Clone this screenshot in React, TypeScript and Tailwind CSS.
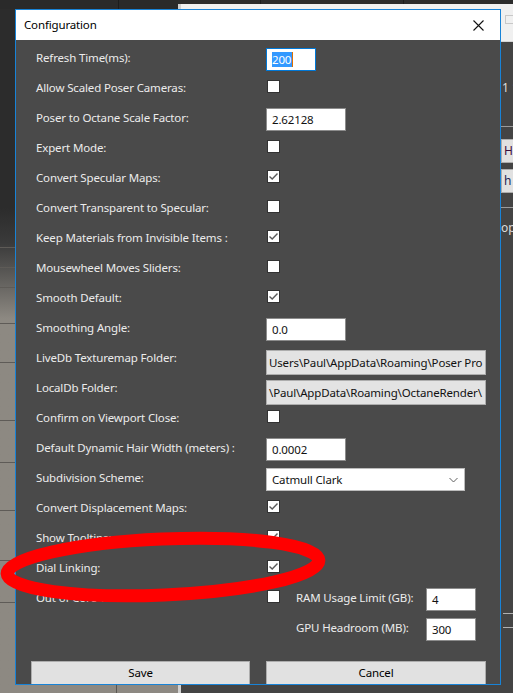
import React from "react";

type Row =
  | { label: string; kind: "check"; checked: boolean }
  | { label: string; kind: "text"; value: string; width: string; focused?: boolean }
  | { label: string; kind: "folder"; value: string }
  | { label: string; kind: "select"; value: string };

const rows: Row[] = [
  { label: "Refresh Time(ms):", kind: "text", value: "200", width: "w-[50px]", focused: true },
  { label: "Allow Scaled Poser Cameras:", kind: "check", checked: false },
  { label: "Poser to Octane Scale Factor:", kind: "text", value: "2.62128", width: "w-[80px]" },
  { label: "Expert Mode:", kind: "check", checked: false },
  { label: "Convert Specular Maps:", kind: "check", checked: true },
  { label: "Convert Transparent to Specular:", kind: "check", checked: false },
  { label: "Keep Materials from Invisible Items :", kind: "check", checked: true },
  { label: "Mousewheel Moves Sliders:", kind: "check", checked: false },
  { label: "Smooth Default:", kind: "check", checked: true },
  { label: "Smoothing Angle:", kind: "text", value: "0.0", width: "w-[80px]" },
  { label: "LiveDb Texturemap Folder:", kind: "folder", value: "Users\\Paul\\AppData\\Roaming\\Poser Pro" },
  { label: "LocalDb Folder:", kind: "folder", value: "\\Paul\\AppData\\Roaming\\OctaneRender\\" },
  { label: "Confirm on Viewport Close:", kind: "check", checked: false },
  { label: "Default Dynamic Hair Width (meters) :", kind: "text", value: "0.0002", width: "w-[80px]" },
  { label: "Subdivision Scheme:", kind: "select", value: "Catmull Clark" },
  { label: "Convert Displacement Maps:", kind: "check", checked: true },
  { label: "Show Tooltips:", kind: "check", checked: true },
  { label: "Dial Linking:", kind: "check", checked: true },
];

const txt = "text-[11.5px] tracking-[-0.15px]";

function CheckBox({ checked }: { checked: boolean }) {
  return (
    <div className="mt-[8px] ml-[1px] w-[13px] h-[13px] shrink-0 bg-white border border-[#333333] flex items-center justify-center">
      {checked && (
        <svg width="11" height="11" viewBox="0 0 11 11">
          <path d="M1.5 5.5 L4.2 8 L9.5 2.5" fill="none" stroke="#5c5c5c" strokeWidth="1.4" />
        </svg>
      )}
    </div>
  );
}

function TextBox({ value, width, focused }: { value: string; width: string; focused?: boolean }) {
  return (
    <div
      className={`mt-[6px] h-[23px] ${width} shrink-0 bg-white border flex items-center pl-[5px] ${txt} text-[#111111] ${
        focused ? "border-[#0078d7]" : "border-[#8c8c8c]"
      }`}
    >
      {focused ? (
        <span className="bg-[#3399ff] text-white leading-[15px] pr-[1px] border-r border-[#e07000]">{value}</span>
      ) : (
        value
      )}
    </div>
  );
}

function Control({ row }: { row: Row }) {
  if (row.kind === "check") return <CheckBox checked={row.checked} />;
  if (row.kind === "text") return <TextBox value={row.value} width={row.width} focused={row.focused} />;
  if (row.kind === "folder")
    return (
      <div className={`mt-[8px] h-[25px] w-[220px] bg-[#e3e3e3] border border-[#adadad] flex items-center pl-[2px] overflow-hidden whitespace-nowrap ${txt} text-[#111111]`}>
        {row.value}
      </div>
    );
  return (
    <div className={`mt-[6px] h-[23px] w-[199px] bg-white border border-[#bcbcbc] flex items-center justify-between pl-[5px] pr-[6px] ${txt} text-[#111111]`}>
      <span>{row.value}</span>
      <svg width="9" height="6" viewBox="0 0 9 6">
        <path d="M0.5 1 L4.5 5 L8.5 1" fill="none" stroke="#606060" strokeWidth="1" />
      </svg>
    </div>
  );
}

export default function App() {
  return (
    <div className="relative w-[513px] h-[693px] overflow-hidden bg-[#2c2c2c] font-['Noto_Sans',sans-serif]">
      {/* desktop behind the dialog */}
      <div className="absolute left-0 top-0 w-[178px] h-[693px] bg-linear-to-b from-[#2c2c2c] from-[30%] via-[#3a3a3a] via-[35%] to-[#8d8982] to-[46%]" />
      <div className="absolute left-0 top-0 w-[178px] h-[9px] bg-[#2a2a2a]" />
      <div className="absolute left-[118px] top-0 w-px h-[9px] bg-[#1c1c1c]" />
      <div className="absolute left-[116px] top-[684px] w-px h-[9px] bg-[#5a5753]" />
      {[247, 267, 287, 323, 362, 420, 462, 510, 560, 602].map((y) => (
        <div key={y} className="absolute left-0 w-[15px] h-px bg-[#5e5b57]" style={{ top: y }} />
      ))}
      {/* window on the right */}
      <div className="absolute left-[178px] top-[4px] w-[335px] h-[689px] bg-[#444444] flex flex-col">
        <div className="h-[38px] bg-[#f0f0f0] border-b border-[#d6d6d6]" />
        <div className="absolute left-0 top-0 w-[3px] h-full bg-[#d0d0d0]" />
      </div>
      <div className="absolute left-[260px] top-0 w-px h-[4px] bg-[#1c1c1c]" />
      <div className="absolute left-[403px] top-0 w-px h-[4px] bg-[#1c1c1c]" />
      <div className="absolute left-[505px] top-[15px] w-[10px] h-[9px] border border-[#c8c8c8]" />
      <div className="absolute left-[502px] top-[79px] text-[12px] text-[#dcdcdc] whitespace-nowrap">1 1</div>
      <div className="absolute left-[501px] top-[126px] w-[12px] h-px bg-[#9a9a9a]" />
      <div className="absolute left-[501px] top-[139px] w-[14px] h-[24px] bg-[#e1e1e1] border border-[#adadad] text-[12px] text-[#3c0f3c] pl-[2px] leading-[22px] whitespace-nowrap overflow-hidden">
        H
      </div>
      <div className="absolute left-[501px] top-[169px] w-[14px] h-[24px] bg-[#e1e1e1] border border-[#adadad] text-[12px] text-[#1e1e50] pl-[2px] leading-[22px] whitespace-nowrap overflow-hidden">
        h :
      </div>
      <div className="absolute left-[501px] top-[207px] w-[12px] h-px bg-[#9a9a9a]" />
      <div className="absolute left-[501px] top-[219px] text-[12px] text-[#dcdcdc] whitespace-nowrap">op</div>
      <div className="absolute left-[503px] top-[613px] w-[10px] h-px bg-[#b0b0b0]" />
      <div className="absolute left-[503px] top-[627px] w-[10px] h-px bg-[#b0b0b0]" />

      {/* dialog */}
      <div className="absolute left-[15px] top-[9px] w-[486px] h-[676px] border border-[#1883d7] flex flex-col overflow-hidden">
        <div className="h-[30px] bg-white flex items-center justify-between pl-[8px] pr-[16px] shrink-0">
          <span className={`${txt} text-black`}>Configuration</span>
          <svg width="11" height="11" viewBox="0 0 11 11">
            <path d="M0.5 0.5 L10.5 10.5 M10.5 0.5 L0.5 10.5" stroke="#111111" strokeWidth="1.1" />
          </svg>
        </div>
        <div className="flex-1 bg-[#4a4a4a] pt-[2px] flex flex-col">
          {rows.map((row) => (
            <div key={row.label} className="h-[30px] flex items-start pl-[20px]">
              <div className={`w-[230px] shrink-0 mt-[8px] ${txt} leading-[16px] text-[#ececec] whitespace-nowrap`}>
                {row.label}
              </div>
              <Control row={row} />
            </div>
          ))}
          <div className="h-[30px] flex items-start pl-[20px]">
            <div className={`w-[230px] shrink-0 mt-[8px] ${txt} leading-[16px] text-[#ececec] whitespace-nowrap`}>
              Out of Core Textures:
            </div>
            <CheckBox checked={false} />
            <div className={`ml-[16px] w-[130px] shrink-0 mt-[8px] ${txt} leading-[16px] text-[#ececec] whitespace-nowrap`}>
              RAM Usage Limit (GB):
            </div>
            <TextBox value="4" width="w-[50px]" />
          </div>
          <div className="h-[30px] flex items-start pl-[280px]">
            <div className={`w-[130px] shrink-0 mt-[8px] ${txt} leading-[16px] text-[#ececec] whitespace-nowrap`}>
              GPU Headroom (MB):
            </div>
            <TextBox value="300" width="w-[50px]" />
          </div>
          <div className="mt-[19px] flex gap-[16px] pl-[15px]">
            <div className={`w-[219px] h-[24px] bg-[#e1e1e1] border border-[#adadad] flex items-center justify-center ${txt} text-black`}>
              Save
            </div>
            <div className={`w-[220px] h-[24px] bg-[#e1e1e1] border border-[#adadad] flex items-center justify-center ${txt} text-black`}>
              Cancel
            </div>
          </div>
        </div>
      </div>

      {/* red highlight ellipse */}
      <svg className="absolute left-0 top-0 pointer-events-none" width="513" height="693" viewBox="0 0 513 693">
        <ellipse cx="163" cy="567" rx="156" ry="28" fill="none" stroke="#ff0000" strokeWidth="13" transform="rotate(-2.5 163 567)" />
      </svg>
    </div>
  );
}
